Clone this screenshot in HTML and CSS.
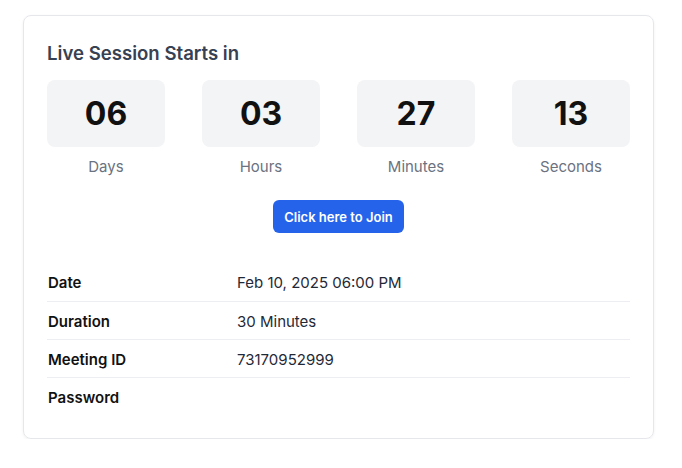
FILE: index.html
```html
<!DOCTYPE html>
<html lang="en">
<head>
    <meta charset="UTF-8">
    <title>Live Session</title>
    <link rel="stylesheet" href="styles.css">
</head>
<body>

    <div class="card">
        <h2 class="title">Live Session Starts in</h2>

        <div class="countdown">
            <div class="unit">
                <div class="num">06</div>
                <div class="label">Days</div>
            </div>
            <div class="unit">
                <div class="num">03</div>
                <div class="label">Hours</div>
            </div>
            <div class="unit">
                <div class="num">27</div>
                <div class="label">Minutes</div>
            </div>
            <div class="unit">
                <div class="num">13</div>
                <div class="label">Seconds</div>
            </div>
        </div>

        <div class="join">
            <button class="btn">Click here to Join</button>
        </div>

        <table class="info">
            <tr>
                <th>Date</th>
                <td>Feb 10, 2025 06:00 PM</td>
            </tr>
            <tr>
                <th>Duration</th>
                <td>30 Minutes</td>
            </tr>
            <tr>
                <th>Meeting ID</th>
                <td>73170952999</td>
            </tr>
            <tr>
                <th>Password</th>
                <td></td>
            </tr>
        </table>
    </div>

</body>
</html>
```

FILE: styles.css
```css
* {
    padding: 0;
    margin: 0;
    box-sizing: border-box;
}
body {
    background-color: #fff;
    font-family: Inter, "Noto Sans", sans-serif;
    color: #111827;
    padding: 15px 28px 0 23px;
}
.card {
    width: 631px;
    border: 1px solid #e5e7eb;
    border-radius: 8px;
    box-shadow: 0 1px 3px rgba(0, 0, 0, 0.06);
    padding: 23px 23px 23px 23px;
}
.title {
    font-size: 18.6px;
    font-weight: 600;
    line-height: 28px;
    color: #374151;
}
.countdown {
    display: grid;
    grid-template-columns: repeat(4, 1fr);
    column-gap: 37px;
    margin-top: 13px;
}
.unit {
    text-align: center;
}
.unit .num {
    height: 67px;
    line-height: 67px;
    background-color: #f3f4f6;
    border-radius: 8px;
    font-size: 32px;
    font-weight: 700;
    color: #111;
}
.unit .label {
    margin-top: 10px;
    font-size: 15px;
    line-height: 20px;
    color: #6b7280;
}
.join {
    display: flex;
    justify-content: center;
    margin-top: 23px;
}
.btn {
    width: 131px;
    height: 33px;
    border: none;
    border-radius: 6px;
    background-color: #2563eb;
    color: #fff;
    font-family: inherit;
    font-size: 13px;
    font-weight: 600;
    cursor: pointer;
}
.info {
    width: 100%;
    margin-top: 30px;
    border-collapse: collapse;
    font-size: 15px;
}
.info tr {
    border-bottom: 1px solid #eceef1;
}
.info tr:last-child {
    border-bottom: none;
}
.info th,
.info td {
    height: 38px;
    text-align: left;
    vertical-align: middle;
    padding: 2px 1px 0 1px;
}
.info th {
    width: 189px;
    font-weight: 600;
    color: #111;
}
.info td {
    color: #1f2937;
}
```
